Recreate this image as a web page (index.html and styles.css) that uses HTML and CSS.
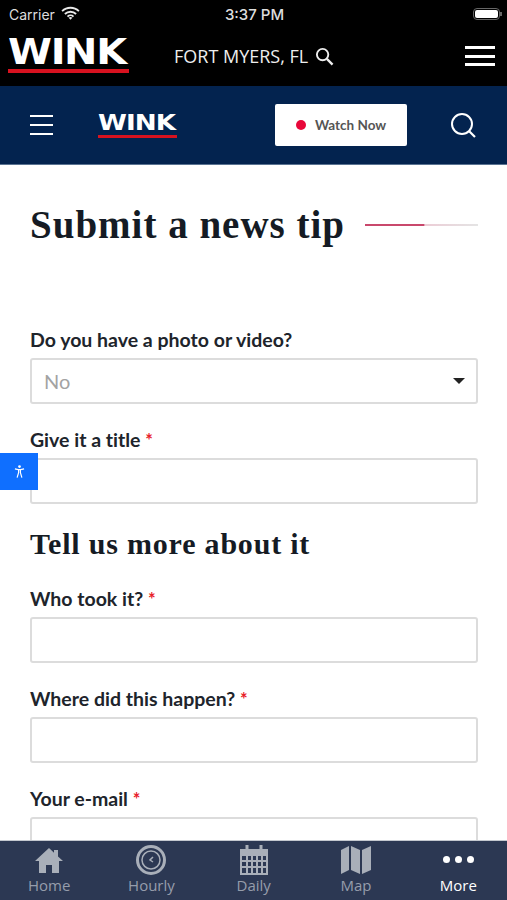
FILE: index.html
```html
<!DOCTYPE html>
<html lang="en">

<head>
	<meta charset="UTF-8">
	<title>Submit a news tip</title>
	<link rel="stylesheet" href="styles.css">
</head>

<body>
	<div class="app">
		<div class="top-black">
			<div class="status">
				<div class="status-left">
					<span>Carrier</span>
					<svg class="wifi" viewBox="0 0 20 15" width="19" height="14">
						<path d="M1 5.5a13 13 0 0 1 18 0M4 8.6a8.6 8.6 0 0 1 12 0M6.8 11.3a4.6 4.6 0 0 1 6.4 0" fill="none" stroke="#e8e8e8" stroke-width="2"/>
						<path d="M8 12.6a3 3 0 0 1 4 0L10 14.8z" fill="#e8e8e8"/>
					</svg>
				</div>
				<span class="status-time">3:37 PM</span>
				<div class="battery"><i></i></div>
			</div>
			<div class="brand-row">
				<div class="logo logo-big"><span>WINK</span></div>
				<div class="city">
					<span>FORT MYERS, FL</span>
					<svg viewBox="0 0 20 20" width="19" height="19">
						<circle cx="8" cy="8" r="6" fill="none" stroke="#eee" stroke-width="2"/>
						<path d="M12.5 12.5l6 6" stroke="#eee" stroke-width="2.4"/>
					</svg>
				</div>
				<div class="burger burger-big"><i></i><i></i><i></i></div>
			</div>
		</div>

		<div class="top-navy">
			<div class="burger burger-small"><i></i><i></i><i></i></div>
			<div class="logo logo-small"><span>WINK</span></div>
			<div class="watch"><b class="dot"></b><span>Watch Now</span></div>
			<svg class="navy-search" viewBox="0 0 26 26" width="26" height="26">
				<circle cx="12" cy="12" r="10" fill="none" stroke="#fff" stroke-width="2"/>
				<path d="M19 19l6 6" stroke="#fff" stroke-width="2.2"/>
			</svg>
		</div>

		<div class="main">
			<div class="title-row">
				<h1>Submit a news tip</h1>
				<div class="title-line"></div>
			</div>

			<div class="field first">
				<label>Do you have a photo or video?</label>
				<div class="input select"><span>No</span><b class="caret"></b></div>
			</div>
			<div class="field">
				<label>Give it a title <em>*</em></label>
				<div class="input"></div>
			</div>

			<h2>Tell us more about it</h2>

			<div class="field">
				<label>Who took it? <em>*</em></label>
				<div class="input"></div>
			</div>
			<div class="field">
				<label>Where did this happen? <em>*</em></label>
				<div class="input"></div>
			</div>
			<div class="field">
				<label>Your e-mail <em>*</em></label>
				<div class="input"></div>
			</div>

			<div class="a11y">
				<svg viewBox="0 0 12 14" width="11" height="13">
					<circle cx="6" cy="1.6" r="1.5" fill="#fff"/>
					<path d="M1 4.200l3.600.8h2.800L11 4.200" fill="none" stroke="#fff" stroke-width="1.300"/>
					<path d="M5 5v3.200L3.400 13.600M7 5v3.200l1.600 5.400" fill="none" stroke="#fff" stroke-width="1.300"/>
				</svg>
			</div>
		</div>

		<div class="tabs">
			<div class="tab">
				<svg class="home" viewBox="0 0 30 26" width="30" height="26">
					<path d="M15 1L1 14h4v12h7v-8h6v8h7V14h4l-5-4.600V3h-4v2.700z" fill="#a9afb9"/>
				</svg>
				<span>Home</span>
			</div>
			<div class="tab">
				<svg viewBox="0 0 30 30" width="30" height="30">
					<circle cx="15" cy="15" r="13.500" fill="none" stroke="#a9afb9" stroke-width="3"/>
					<circle cx="15" cy="15" r="9" fill="none" stroke="#a9afb9" stroke-width="1.500"/>
					<path d="M17 12l-3 3 3 2" fill="none" stroke="#a9afb9" stroke-width="1.500"/>
				</svg>
				<span>Hourly</span>
			</div>
			<div class="tab">
				<svg viewBox="0 0 30 30" width="30" height="30">
					<path d="M1 4h28v26H1z" fill="#a9afb9"/>
					<path d="M8 0v5M22 0v5" stroke="#a9afb9" stroke-width="3"/>
					<path d="M3 11h24v17H3z" fill="#2c3853"/>
					<path d="M8 10v18M13 10v18M18 10v18M23 10v18M3 16h24M3 22h24" stroke="#a9afb9" stroke-width="2"/>
				</svg>
				<span>Daily</span>
			</div>
			<div class="tab">
				<svg viewBox="0 0 30 30" width="30" height="30">
					<path d="M0 5l8-4v24l-8 4zM10 1l9 4v24l-9-4zM21 5l9-4v24l-9 4z" fill="#a9afb9"/>
				</svg>
				<span>Map</span>
			</div>
			<div class="tab active">
				<div class="dots"><i></i><i></i><i></i></div>
				<span>More</span>
			</div>
		</div>
	</div>
</body>

</html>
```

FILE: styles.css
```css
/*
App frame. Tab bar sits at the bottom, the form just gets cut off above it.
*/
* {
	box-sizing: border-box;
}

body {
	margin: 0;
	background: #fff;
}

.app {
	display: flex;
	flex-direction: column;
	width: 507px;
	height: 900px;
	overflow: hidden;
}

/*
Black status bar + WINK weather header
*/
.top-black {
	height: 86px;
	background: #000;
	color: #eee;
}

.status {
	display: grid;
	grid-template-columns: 1fr auto 1fr;
	align-items: center;
	height: 28px;
	padding: 0 7px 0 9px;
	font-family: Inter, "Liberation Sans", sans-serif;
	font-size: 14px;
	color: #ddd;
}

.status-left {
	display: flex;
	align-items: center;
	gap: 6px;
}

.status-time {
	font-weight: 500;
	font-size: 15px;
}

.wifi {
	margin-top: -3px;
}

.battery {
	position: relative;
	justify-self: end;
	width: 27px;
	height: 12px;
	border: 1px solid #666;
	border-radius: 4px;
	padding: 1px;
}

.battery i {
	display: block;
	height: 100%;
	border-radius: 2px;
	background: #fff;
}

.battery::after {
	content: "";
	position: absolute;
	right: -3px;
	top: 3px;
	width: 2px;
	height: 4px;
	background: #666;
}

.brand-row {
	display: flex;
	align-items: flex-start;
	padding: 9px 12px 0 8px;
}

.logo {
	flex: none;
	font-family: "DejaVu Sans", sans-serif;
	font-weight: bold;
	color: #fff;
	border-bottom-style: solid;
	border-bottom-color: #d8121f;
}

.logo span {
	display: block;
	transform-origin: 0 0;
}

.logo-big {
	width: 121px;
	height: 36px;
	border-bottom-width: 4px;
	font-size: 35px;
	line-height: 31px;
	letter-spacing: -1.2px;
}

.logo-big span {
	transform: scale(1.14, 1);
}

.logo-small {
	width: 79px;
	height: 25px;
	margin-top: 1px;
	border-bottom-width: 3px;
	font-size: 22px;
	line-height: 20px;
	letter-spacing: -0.8px;
}

.logo-small span {
	transform: scale(1.19, 1);
}

.city {
	display: flex;
	align-items: center;
	gap: 7px;
	margin: 7px auto 0 45px;
	font-family: "Open Sans", sans-serif;
	font-size: 18px;
	line-height: 24px;
	white-space: nowrap;
}

.burger {
	display: flex;
	flex-direction: column;
	justify-content: space-between;
}

.burger i {
	display: block;
	background: #fff;
}

.burger-big {
	width: 30px;
	height: 20px;
	margin-top: 9px;
}

.burger-big i {
	height: 3px;
}

.burger-small {
	width: 23px;
	height: 20px;
}

.burger-small i {
	height: 2px;
}

/*
Navy site nav
*/
.top-navy {
	display: flex;
	align-items: center;
	height: 79px;
	padding: 0 31px 0 30px;
	background: #03234f;
	border-bottom: 1px solid #5a7392;
}

.top-navy .logo-small {
	margin-left: 45px;
}

.watch {
	display: flex;
	align-items: center;
	gap: 9px;
	width: 132px;
	height: 42px;
	margin-left: 98px;
	padding-left: 21px;
	background: #fff;
	border-radius: 2px;
	font-family: Lato, sans-serif;
	font-weight: bold;
	font-size: 13.500px;
	color: #555;
	white-space: nowrap;
}

.dot {
	width: 10px;
	height: 10px;
	border-radius: 50%;
	background: #e8083a;
}

.navy-search {
	margin-left: auto;
}

/*
Form
*/
.main {
	position: relative;
	flex: 1;
	min-height: 0;
	overflow: hidden;
	padding: 0 29px 0 30px;
	font-family: Lato, sans-serif;
	color: #20242b;
}

.title-row {
	display: flex;
	align-items: center;
	gap: 20px;
	height: 50px;
	margin-top: 35px;
}

h1 {
	margin: 0;
	font-family: "Liberation Serif", serif;
	font-weight: bold;
	font-size: 39px;
	letter-spacing: 1px;
	line-height: 50px;
	white-space: nowrap;
	color: #151b24;
}

.title-line {
	flex: 1;
	height: 2px;
	background: linear-gradient(to right, #c9486c 0, #c9486c 52%, #eccdd6 53%, #e4e4e4 100%);
}

.field label {
	display: block;
	height: 30px;
	font-weight: bold;
	font-size: 19.500px;
	line-height: 24px;
	font-variant-ligatures: none;
}

.field em {
	color: #e8202a;
	font-style: normal;
	font-size: 18px;
}

.field {
	margin-top: 23px;
}

.field.first {
	margin-top: 78px;
}

.field + .field {
	margin-top: 24px;
}

.input {
	height: 46px;
	border: 2px solid #dcdcdc;
	border-radius: 3px;
	background: #fff;
}

.select {
	display: flex;
	align-items: center;
	justify-content: space-between;
	padding: 0 11px 0 12px;
	font-size: 20px;
	color: #a3a3a3;
}

.caret {
	width: 0;
	height: 0;
	border-left: 6px solid transparent;
	border-right: 6px solid transparent;
	border-top: 6px solid #222;
}

h2 {
	margin: 22px 0 0;
	font-family: "Liberation Serif", serif;
	font-weight: bold;
	font-size: 30px;
	line-height: 36px;
	letter-spacing: 0.8px;
	color: #151b24;
}

h2 + .field {
	margin-top: 25px;
}

/* floats over the form */
.a11y {
	position: absolute;
	left: 0;
	top: 288px;
	display: flex;
	align-items: center;
	justify-content: center;
	width: 38px;
	height: 37px;
	background: #0f6fff;
}

/*
Tab bar
*/
.tabs {
	display: flex;
	flex: none;
	height: 60px;
	background: #2c3853;
	border-top: 1px solid #c4c8cf;
	font-family: "Open Sans", sans-serif;
	font-size: 15px;
	color: #969dab;
}

.tab {
	display: flex;
	flex: none;
	flex-direction: column;
	align-items: center;
	justify-content: flex-end;
	width: 102.300px;
	padding-bottom: 5px;
	line-height: 20px;
}

.tab:first-child {
	margin-left: -2px;
}

.home {
	margin-bottom: 2px;
}

.tab.active {
	color: #fff;
	font-weight: 500;
}

.dots {
	display: flex;
	gap: 5px;
	height: 28px;
	padding-top: 9px;
}

.dots i {
	width: 7px;
	height: 7px;
	border-radius: 50%;
	background: #fff;
}
```
